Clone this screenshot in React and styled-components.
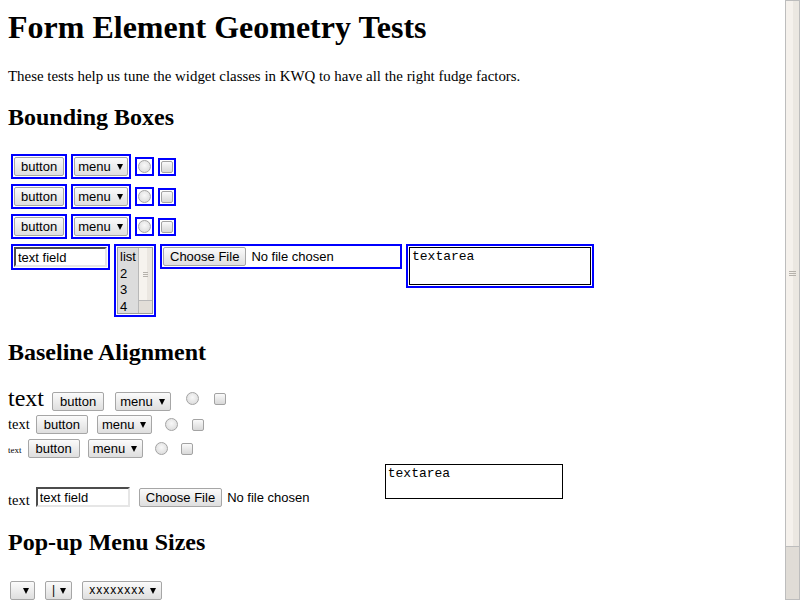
import React from "react";
import styled, { createGlobalStyle } from "styled-components";

const GlobalStyle = createGlobalStyle`
  html, body {
    margin: 0;
    padding: 0;
    background: #fff;
  }
`;

const Page = styled.div`
  display: flex;
  width: 800px;
  height: 600px;
  overflow: hidden;
`;

const Content = styled.div`
  flex: 1;
  padding: 8px 8px 0;
  font-family: "Liberation Serif", "Times New Roman", serif;
  font-size: 14px;
  color: #000;
`;

const Title = styled.h1`
  margin: 1px 0 0;
  font-size: 32px;
  line-height: 37px;
  font-weight: bold;
`;

const Intro = styled.p`
  margin: 22px 0 0;
  font-size: 14.9px;
  line-height: 17px;
`;

const Heading = styled.h2`
  margin: ${(p) => p.top}px 0 0;
  font-size: 24px;
  line-height: 28px;
  font-weight: bold;
`;

/* ---------- widgets ---------- */

const Button = styled.button`
  display: inline-flex;
  align-items: center;
  justify-content: center;
  box-sizing: border-box;
  height: 19px;
  margin: 0;
  padding: 0 ${(p) => (p.roomy ? 7 : 6)}px;
  border: 1px solid #a6a6a6;
  border-radius: 2px;
  background: linear-gradient(#fbfbfb, #dedede);
  font-family: "Liberation Sans", Arial, sans-serif;
  font-size: 13px;
  line-height: 17px;
  color: #000;
`;

const Popup = styled.span`
  display: inline-flex;
  align-items: center;
  box-sizing: border-box;
  height: 19px;
  padding: ${(p) => (p.small ? "0 5px 0 6px" : p.roomy ? "0 5px 0 4px" : "0 4px 0 3px")};
  border: 1px solid #a6a6a6;
  border-radius: 2px;
  background: linear-gradient(#fbfbfb, #dedede);
  font-family: "Liberation Sans", Arial, sans-serif;
  font-size: ${(p) => (p.small ? 12 : 13)}px;
  letter-spacing: ${(p) => (p.small ? 1 : 0)}px;
  line-height: 17px;
  color: #000;
`;

/* the little black triangle of a pop-up button */
const Arrow = styled.span`
  display: inline-block;
  width: 0;
  height: 0;
  margin-left: ${(p) => p.gap ?? 6}px;
  border-left: 3px solid transparent;
  border-right: 3px solid transparent;
  border-top: 6px solid #000;
`;

const Radio = styled.span`
  display: inline-block;
  box-sizing: border-box;
  width: 13px;
  height: 13px;
  border: 1px solid #a3a3a3;
  border-radius: 50%;
  background: radial-gradient(circle at 50% 40%, #f8f8f8, #d6d6d6);
`;

const Check = styled.span`
  display: inline-block;
  box-sizing: border-box;
  width: 12px;
  height: 12px;
  border: 1px solid #a3a3a3;
  border-radius: 2px;
  background: linear-gradient(#fafafa, #d8d8d8);
`;

const TextField = styled.input`
  box-sizing: border-box;
  width: ${(p) => p.w}px;
  height: 20px;
  margin: 0;
  padding: 0 2px;
  border: 2px inset #e6e6e6;
  border-top-color: #a0a0a0;
  border-left-color: #a0a0a0;
  background: #fff;
  font-family: "Liberation Sans", Arial, sans-serif;
  font-size: 13px;
  color: #000;
  outline: none;
`;

const FileControl = styled.div`
  display: flex;
  align-items: center;
  width: 236px;
  font-family: "Liberation Sans", Arial, sans-serif;
  font-size: 13px;
`;

const FileName = styled.span`
  margin-left: 5px;
  color: #000;
`;

const TextArea = styled.textarea`
  box-sizing: border-box;
  width: ${(p) => p.w}px;
  height: ${(p) => p.h}px;
  margin: 0 0 ${(p) => p.mb || 0}px;
  padding: 1px 2px;
  border: 1px solid #000;
  resize: none;
  font-family: "Liberation Mono", "Courier New", monospace;
  font-size: 13px;
  line-height: 15px;
  color: #000;
  overflow: hidden;
  outline: none;
`;

const ListBox = styled.div`
  display: flex;
  box-sizing: border-box;
  width: 36px;
  height: 67px;
  border: 1px solid #9c9c9c;
  background: #dcdcdc;
`;

const ListItems = styled.div`
  flex: 1;
  padding: 1px 0 0 2px;
  font-family: "Liberation Sans", Arial, sans-serif;
  font-size: 13px;
  line-height: 16.7px;
  color: #000;
`;

const MiniTrack = styled.div`
  display: flex;
  flex-direction: column;
  width: 13px;
  border-left: 1px solid #b8b8b8;
  background: #e2ded8;
`;

const MiniThumb = styled.div`
  display: flex;
  align-items: center;
  justify-content: center;
  height: 52px;
  border-bottom: 1px solid #b8b8b8;
  background: linear-gradient(90deg, #f6f3ee 60%, #ebe7e1 60%);
`;

const Grip = styled.div`
  width: ${(p) => p.w}px;
  height: 5px;
  background: repeating-linear-gradient(#b5b1ab 0 1px, transparent 1px 2px);
`;

/* ---------- bounding boxes ---------- */

const BoxRows = styled.div`
  display: flex;
  flex-direction: column;
  gap: 5px;
  margin-top: 23px;
  padding-left: 3px;
`;

const BoxRow = styled.div`
  display: flex;
  align-items: ${(p) => (p.top ? "flex-start" : "center")};
  gap: 4px;
`;

const Outline = styled.span`
  display: inline-flex;
  border: 2px solid #0000ff;
  padding: 1px;
`;

/* ---------- baseline alignment ---------- */

const BaseRow = styled.div`
  display: flex;
  align-items: baseline;
  margin-top: ${(p) => p.top}px;
`;

const Word = styled.span`
  font-size: ${(p) => p.size}px;
  line-height: 1;
  margin-right: ${(p) => p.gap}px;
`;

const Spaced = styled.span`
  display: inline-flex;
  align-self: ${(p) => (p.center ? "center" : "auto")};
  margin-right: ${(p) => p.gap}px;
`;

const FieldRow = styled.div`
  display: flex;
  align-items: flex-end;
  margin-top: 6px;
`;

const MenuRow = styled.div`
  display: flex;
  align-items: center;
  margin-top: 25px;
  padding-left: 2px;

  & > * + * {
    margin-left: 10px;
  }
`;

/* ---------- page scrollbar ---------- */

const Scrollbar = styled.div`
  display: flex;
  flex-direction: column;
  box-sizing: border-box;
  width: 15px;
  height: 600px;
  border: 1px solid #bdbdbd;
  background: #e0dcd6;
`;

const Thumb = styled.div`
  display: flex;
  align-items: center;
  justify-content: center;
  height: 545px;
  border-bottom: 1px solid #bdbdbd;
  background: linear-gradient(90deg, #f5f1ec 55%, #ebe7e1 55%);
`;

const Menu = ({ roomy }) => (
  <Popup roomy={roomy}>
    menu
    <Arrow />
  </Popup>
);

const BoundingBoxes = () => (
  <BoxRows>
    {[0, 1, 2].map((i) => (
      <BoxRow key={i}>
        <Outline>
          <Button>button</Button>
        </Outline>
        <Outline>
          <Menu />
        </Outline>
        <Outline>
          <Radio />
        </Outline>
        <Outline>
          <Check />
        </Outline>
      </BoxRow>
    ))}
    <BoxRow top>
      <Outline>
        <TextField w={93} defaultValue="text field" />
      </Outline>
      <Outline>
        <ListBox>
          <ListItems>
            <div>list</div>
            <div>2</div>
            <div>3</div>
            <div>4</div>
          </ListItems>
          <MiniTrack>
            <MiniThumb>
              <Grip w={5} />
            </MiniThumb>
          </MiniTrack>
        </ListBox>
      </Outline>
      <Outline>
        <FileControl>
          <Button>Choose File</Button>
          <FileName>No file chosen</FileName>
        </FileControl>
      </Outline>
      <Outline>
        <TextArea w={182} h={38} defaultValue="textarea" />
      </Outline>
    </BoxRow>
  </BoxRows>
);

const baseRows = [
  { size: 24, top: 20, gaps: [8, 11, 15, 15] },
  { size: 14.5, top: 4, gaps: [6, 9, 13, 14] },
  { size: 9, top: 5, gaps: [6, 8, 12, 13] },
];

const BaselineAlignment = () => (
  <>
    {baseRows.map((r) => (
      <BaseRow key={r.size} top={r.top}>
        <Word size={r.size} gap={r.gaps[0]}>
          text
        </Word>
        <Spaced gap={r.gaps[1]}>
          <Button roomy>button</Button>
        </Spaced>
        <Spaced gap={r.gaps[2]}>
          <Menu roomy />
        </Spaced>
        <Spaced gap={r.gaps[3]} center>
          <Radio />
        </Spaced>
        <Spaced gap={0} center>
          <Check />
        </Spaced>
      </BaseRow>
    ))}
    <FieldRow>
      <Word size={14.5} gap={6}>
        text
      </Word>
      <Spaced gap={9}>
        <TextField w={94} defaultValue="text field" />
      </Spaced>
      <Spaced gap={10}>
        <FileControl>
          <Button>Choose File</Button>
          <FileName>No file chosen</FileName>
        </FileControl>
      </Spaced>
      <Spaced gap={0}>
        <TextArea w={178} h={35} mb={8} defaultValue="textarea" />
      </Spaced>
    </FieldRow>
  </>
);

export default function App() {
  return (
    <Page>
      <GlobalStyle />
      <Content>
        <Title>Form Element Geometry Tests</Title>
        <Intro>
          These tests help us tune the widget classes in KWQ to have all the
          right fudge factors.
        </Intro>

        <Heading top={18}>Bounding Boxes</Heading>
        <BoundingBoxes />

        <Heading top={21}>Baseline Alignment</Heading>
        <BaselineAlignment />

        <Heading top={21}>Pop-up Menu Sizes</Heading>
        <MenuRow>
          <Popup small>
            <Arrow gap={6} />
          </Popup>
          <Popup small>
            |<Arrow gap={4} />
          </Popup>
          <Popup small>
            xxxxxxxx
            <Arrow gap={5} />
          </Popup>
        </MenuRow>
      </Content>
      <Scrollbar>
        <Thumb>
          <Grip w={7} />
        </Thumb>
      </Scrollbar>
    </Page>
  );
}
